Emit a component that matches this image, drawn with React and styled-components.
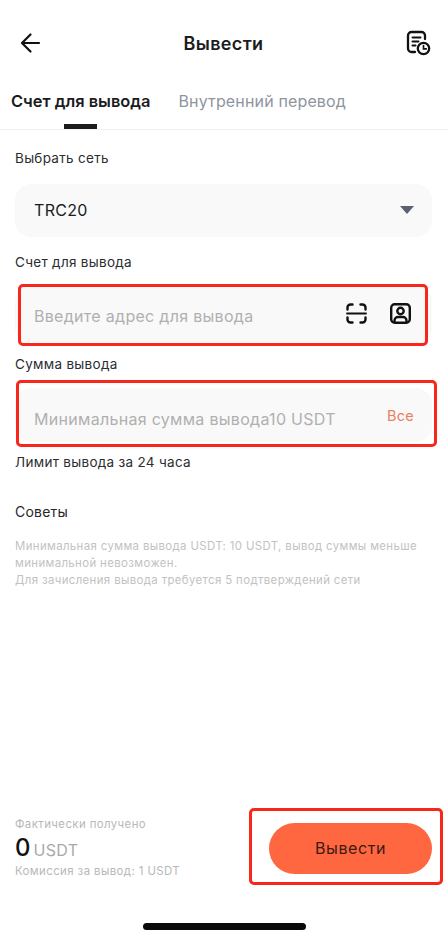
import styled, { createGlobalStyle } from 'styled-components'

const GlobalStyle = createGlobalStyle`
    html, body {
        margin: 0;
        padding: 0;
        background: #fff;
    }
    * {
        box-sizing: border-box;
    }
`

const Page = styled.div`
    width: 448px;
    height: 937px;
    display: flex;
    flex-direction: column;
    overflow: hidden;
    background: #fff;
    color: #1b1c1e;
    font-family: Inter, "Liberation Sans", sans-serif;
`

const Header = styled.header`
    height: 86px;
    display: flex;
    align-items: center;
    justify-content: space-between;
    padding: 0 17px 0 20px;
`

const IconButton = styled.button`
    width: ${p => p.$size}px;
    height: ${p => p.$size}px;
    padding: 0;
    border: 0;
    background: none;
    color: #111;
    display: flex;
`

const Title = styled.h1`
    margin: 0;
    font-size: 18px;
    font-weight: 600;
    letter-spacing: .35px;
`

const Tabs = styled.nav`
    height: 44px;
    display: flex;
    gap: 28px;
    padding-left: 11px;
    border-bottom: 1px solid #f2f2f2;
`

const Tab = styled.div`
    position: relative;
    font-size: ${p => (p.$active ? 16.4 : 16)}px;
    font-weight: ${p => (p.$active ? 600 : 400)};
    letter-spacing: ${p => (p.$active ? 0 : .15)}px;
    color: ${p => (p.$active ? '#1b1c1e' : '#8e959e')};
    padding-top: 4px;
    line-height: 22px;

    &::after {
        content: '';
        display: ${p => (p.$active ? 'block' : 'none')};
        position: absolute;
        left: 53px;
        bottom: 0;
        width: 33px;
        height: 5px;
        background: #1b1c1e;
    }
`

const Form = styled.main`
    display: flex;
    flex-direction: column;
    padding: 19px 16px 0 15px;
`

const Label = styled.div`
    font-size: 13.5px;
    line-height: 18px;
    letter-spacing: .3px;
    color: #2c2d30;
    margin-bottom: ${p => p.$gap}px;
`

const Field = styled.div`
    position: relative;
    height: ${p => p.$height}px;
    display: flex;
    align-items: center;
    justify-content: space-between;
    padding: 0 19px;
    margin-bottom: ${p => p.$gap}px;
    background: #f9f9f9;
    border-radius: 16px;
    font-size: 16px;
    letter-spacing: .3px;
`

const Value = styled.span`
    margin-top: -2px;
`

const Placeholder = styled.span`
    color: #b0b0b0;
    margin-top: ${p => p.$shift}px;
`

const Actions = styled.div`
    display: flex;
    align-items: center;
    gap: 23px;
    margin-top: -3px;
    margin-right: 2px;
    color: #111;
`

const AllLink = styled.span`
    font-size: 14.5px;
    color: #e9805f;
    margin-right: -1px;
`

const Caret = styled.span`
    width: 0;
    height: 0;
    margin-top: -2px;
    margin-right: -1px;
    border-left: 7px solid transparent;
    border-right: 7px solid transparent;
    border-top: 8px solid #596172;
`

// красные рамки из скриншота лежат поверх контента
const Mark = styled.div`
    position: absolute;
    top: ${p => p.$top}px;
    left: ${p => p.$left}px;
    right: ${p => p.$right}px;
    bottom: ${p => p.$bottom}px;
    border: 3px solid #f8261b;
    border-radius: 5px;
    pointer-events: none;
`

const Limit = styled.div`
    font-size: 13.5px;
    line-height: 18px;
    letter-spacing: .3px;
    color: #2c2d30;
`

const TipsTitle = styled.div`
    margin-top: 32px;
    font-size: 14px;
    line-height: 18px;
    letter-spacing: .2px;
    color: #26272a;
`

const TipsText = styled.p`
    margin: 17px 0 0;
    font-size: 11.4px;
    line-height: 17px;
    letter-spacing: .38px;
    color: #c2c2c2;
    white-space: nowrap;
`

const Footer = styled.footer`
    margin-top: auto;
    display: flex;
    align-items: center;
    justify-content: space-between;
    padding: 0 16px 0 15px;
`

const Summary = styled.div`
    display: flex;
    flex-direction: column;
    padding-bottom: 3px;
`

const SmallNote = styled.div`
    font-size: 11.4px;
    line-height: 16px;
    letter-spacing: .42px;
    color: #b8b8b8;
`

const Amount = styled.div`
    display: flex;
    align-items: baseline;
    gap: 3px;
    margin-top: 3px;
    line-height: 26px;
    font-size: 24px;
    font-weight: 500;
    color: #111;

    span {
        font-size: 16px;
        font-weight: 400;
        letter-spacing: .3px;
        color: #a9a9a9;
    }
`

const SubmitWrap = styled.div`
    position: relative;
    margin-bottom: 2px;
`

const Submit = styled.button`
    display: block;
    width: 163px;
    height: 51px;
    border: 0;
    border-radius: 26px;
    background: #ff6740;
    color: #3a1a12;
    font-family: inherit;
    font-size: 16px;
    font-weight: 400;
    letter-spacing: .6px;
`

const HomeBar = styled.div`
    width: 163px;
    height: 7px;
    margin: 41px auto 7px;
    border-radius: 4px;
    background: #0a0a0a;
`

function BackIcon() {
    return (
        <svg width="22" height="22" viewBox="0 0 22 22" fill="none" stroke="currentColor" strokeWidth="2.2" strokeLinecap="round" strokeLinejoin="round">
            <path d="M19 11H2.500M10.500 2.500 2 11l8.500 8.500" />
        </svg>
    )
}

function HistoryIcon() {
    return (
        <svg width="26" height="26" viewBox="0 0 26 26" fill="none" stroke="currentColor" strokeWidth="2.3" strokeLinecap="round">
            <path d="M20 9V5.500A3.500 3.500 0 0 0 16.500 2h-10A3.500 3.500 0 0 0 3 5.500v13A3.500 3.500 0 0 0 6.500 22H10" />
            <path d="M7.500 7.500h8M7.500 11.500h6M7.500 15.500h3" strokeWidth="2" />
            <circle cx="18.500" cy="18.500" r="5.700" />
            <path d="M18.500 15.500v3.300h2.800" strokeWidth="1.700" />
        </svg>
    )
}

function ScanIcon() {
    return (
        <svg width="21" height="21" viewBox="0 0 21 21" fill="none" stroke="currentColor" strokeWidth="2.4" strokeLinecap="round">
            <path d="M1.500 6.500V4.500a3 3 0 0 1 3-3h2M14.500 1.500h2a3 3 0 0 1 3 3v2" />
            <path d="M1.500 14.500v2a3 3 0 0 0 3 3h2M14.500 19.500h2a3 3 0 0 0 3-3v-2" />
            <path d="M1 10.500h19" strokeWidth="1.800" />
        </svg>
    )
}

function ContactIcon() {
    return (
        <svg width="21" height="21" viewBox="0 0 21 21" fill="none" stroke="currentColor" strokeWidth="2.400">
            <rect x="1.200" y="1.200" width="18.600" height="18.600" rx="3.500" />
            <circle cx="10.500" cy="8" r="3.200" />
            <path d="M4.500 19v-1.500a3.500 3.500 0 0 1 3.500-3.500h5a3.500 3.500 0 0 1 3.500 3.500V19" />
        </svg>
    )
}

function App() {
    return (
        <Page>
            <GlobalStyle />
            <Header>
                <IconButton $size={22}><BackIcon /></IconButton>
                <Title>Вывести</Title>
                <IconButton $size={26}><HistoryIcon /></IconButton>
            </Header>

            <Tabs>
                <Tab $active>Счет для вывода</Tab>
                <Tab>Внутренний перевод</Tab>
            </Tabs>

            <Form>
                <Label $gap={17}>Выбрать сеть</Label>
                <Field $height={53} $gap={16}>
                    <Value>TRC20</Value>
                    <Caret />
                </Field>

                <Label $gap={15}>Счет для вывода</Label>
                <Field $height={58} $gap={11}>
                    <Placeholder $shift={2}>Введите адрес для вывода</Placeholder>
                    <Actions>
                        <ScanIcon />
                        <ContactIcon />
                    </Actions>
                    <Mark $top={-2} $left={3} $right={4} $bottom={-2} />
                </Field>

                <Label $gap={15}>Сумма вывода</Label>
                <Field $height={54} $gap={11}>
                    <Placeholder $shift={8}>Минимальная сумма вывода10 USDT</Placeholder>
                    <AllLink>Все</AllLink>
                    <Mark $top={-8} $left={1} $right={-5} $bottom={-5} />
                </Field>

                <Limit>Лимит вывода за 24 часа</Limit>

                <TipsTitle>Советы</TipsTitle>
                <TipsText>
                    Минимальная сумма вывода USDT: 10 USDT, вывод суммы меньше<br />
                    минимальной невозможен.<br />
                    Для зачисления вывода требуется 5 подтверждений сети
                </TipsText>
            </Form>

            <Footer>
                <Summary>
                    <SmallNote>Фактически получено</SmallNote>
                    <Amount>0 <span>USDT</span></Amount>
                    <SmallNote>Комиссия за вывод: 1 USDT</SmallNote>
                </Summary>
                <SubmitWrap>
                    <Submit>Вывести</Submit>
                    <Mark $top={-15} $left={-20} $right={-11} $bottom={-11} />
                </SubmitWrap>
            </Footer>
            <HomeBar />
        </Page>
    )
}

export default App
